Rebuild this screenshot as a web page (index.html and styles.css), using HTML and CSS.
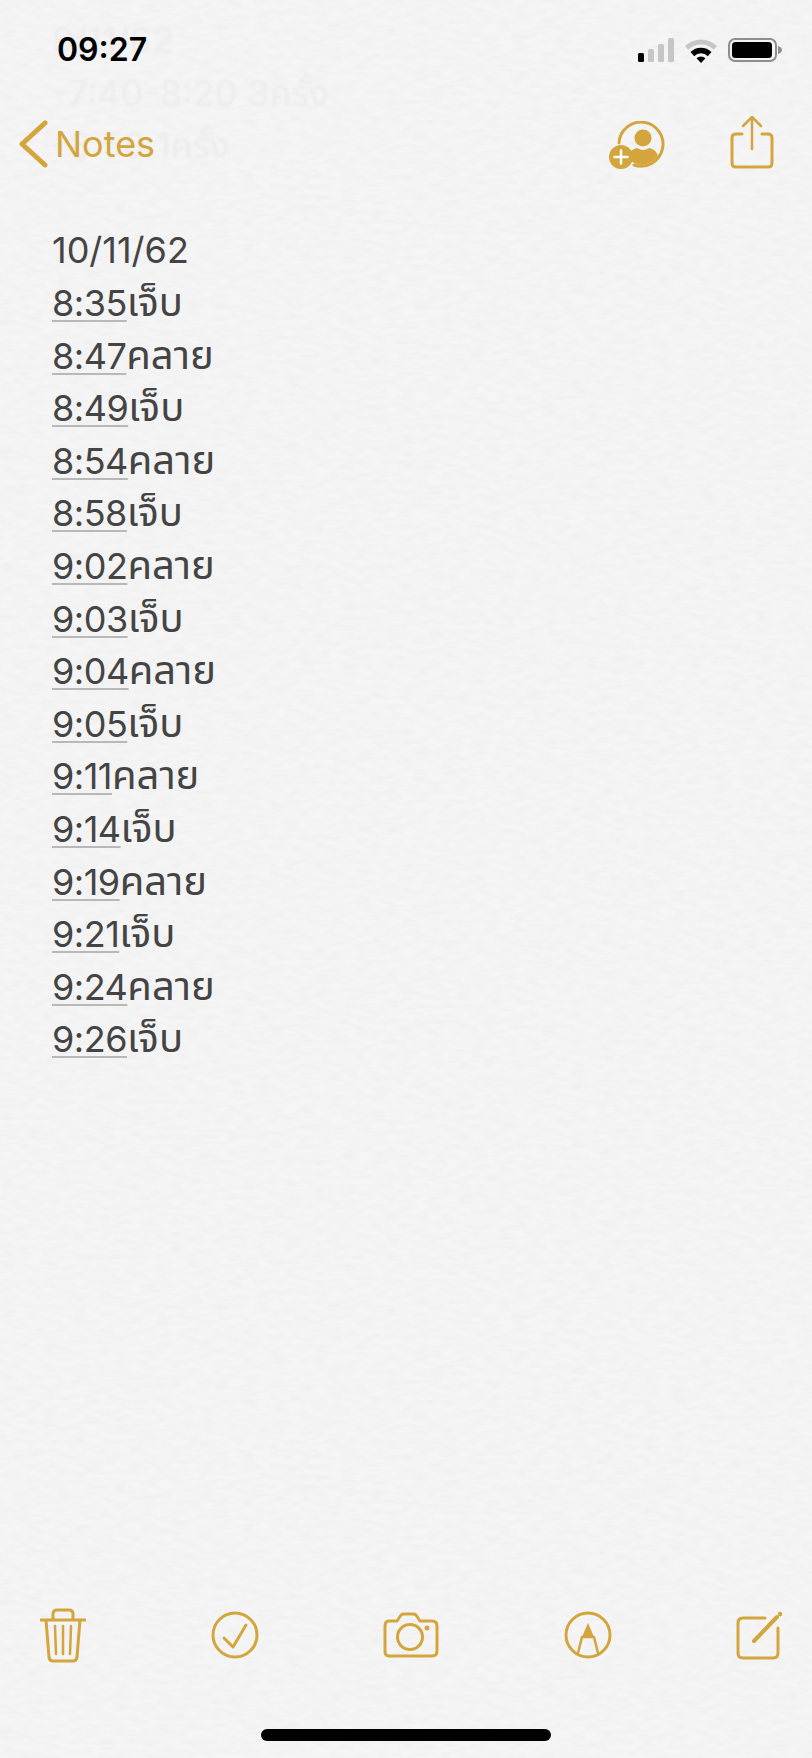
FILE: index.html
```html
<!DOCTYPE html>
<html lang="th">
<head>
  <meta charset="UTF-8">
  <meta name="viewport" content="width=device-width, initial-scale=1.0">
  <title>Notes</title>
  <link rel="stylesheet" href="styles.css">
</head>
<body>
  <div class="screen">
    <!-- paper grain -->
    <svg class="paper" width="812" height="1758">
      <filter id="grain">
        <feTurbulence type="fractalNoise" baseFrequency="0.07 0.2" numOctaves="4" seed="7"/>
        <feColorMatrix values="0 0 0 0 0.45  0 0 0 0 0.45  0 0 0 0 0.45  0.14 0 0 0 -0.045"/>
      </filter>
      <rect width="812" height="1758" filter="url(#grain)"/>
    </svg>

    <div class="note">
      <div class="line scrolled">9/11/62</div>
      <div class="line scrolled">-7:40-8:20 3<span class="thai">ครั้ง</span></div>
      <div class="line scrolled">-8:50 1<span class="thai">ครั้ง</span></div>
      <div class="line">&nbsp;</div>
      <div class="line">10/11/62</div>
      <div class="line"><span class="time">8:35</span><span class="thai">เจ็บ</span></div>
      <div class="line"><span class="time">8:47</span><span class="thai">คลาย</span></div>
      <div class="line"><span class="time">8:49</span><span class="thai">เจ็บ</span></div>
      <div class="line"><span class="time">8:54</span><span class="thai">คลาย</span></div>
      <div class="line"><span class="time">8:58</span><span class="thai">เจ็บ</span></div>
      <div class="line"><span class="time">9:02</span><span class="thai">คลาย</span></div>
      <div class="line"><span class="time">9:03</span><span class="thai">เจ็บ</span></div>
      <div class="line"><span class="time">9:04</span><span class="thai">คลาย</span></div>
      <div class="line"><span class="time">9:05</span><span class="thai">เจ็บ</span></div>
      <div class="line"><span class="time">9:11</span><span class="thai">คลาย</span></div>
      <div class="line"><span class="time">9:14</span><span class="thai">เจ็บ</span></div>
      <div class="line"><span class="time">9:19</span><span class="thai">คลาย</span></div>
      <div class="line"><span class="time">9:21</span><span class="thai">เจ็บ</span></div>
      <div class="line"><span class="time">9:24</span><span class="thai">คลาย</span></div>
      <div class="line"><span class="time">9:26</span><span class="thai">เจ็บ</span></div>
    </div>

    <div class="toolbar">
      <svg class="icon" width="46" height="60" viewBox="0 0 46 60">
        <path d="M1 14H45M13 14V8Q13 4 17 4H29Q33 4 33 8V14M6 14L9 51Q9.5 55 13 55H33Q36.5 55 37 51L40 14"/>
        <path class="thin" d="M15 20L16 48M23 20V48M31 20L30 48"/>
      </svg>
      <svg class="icon" width="50" height="60" viewBox="0 0 50 60">
        <circle cx="25" cy="29" r="22"/>
        <path d="M14 32L23 41L36 19"/>
      </svg>
      <svg class="icon" width="56" height="60" viewBox="0 0 56 60">
        <path d="M6 15H14L18 9Q19 8 21 8H30Q32 8 33 9L37 15H49Q54 15 54 20V45Q54 50 49 50H6Q2 50 2 45V20Q2 15 6 15Z"/>
        <circle cx="27" cy="31" r="12.5"/>
        <circle class="solid" cx="44" cy="22" r="2.5"/>
      </svg>
      <svg class="icon" width="50" height="60" viewBox="0 0 50 60">
        <circle cx="25" cy="29" r="22"/>
        <path class="solid" d="M25 17L31 31H19Z"/>
        <path class="thin" d="M19 31L15 47M31 31L35 47M19 31H31"/>
      </svg>
      <svg class="icon" width="46" height="60" viewBox="0 0 46 60">
        <path d="M29 12H7Q2 12 2 17V47Q2 52 7 52H37Q42 52 42 47V22"/>
        <path class="pen" d="M18 35L41 11"/>
        <circle class="solid" cx="44" cy="8" r="2.2"/>
      </svg>
    </div>
    <div class="home-bar"></div>

    <div class="top">
      <div class="status">
        <span class="clock">09:27</span>
        <div class="status-icons">
          <svg width="36" height="24" viewBox="0 0 36 24">
            <rect x="0" y="15" width="6" height="9" rx="1.5" fill="#000"/>
            <rect x="10" y="11" width="6" height="13" rx="1.5" fill="#c6c6c6"/>
            <rect x="20" y="6" width="6" height="18" rx="1.5" fill="#c6c6c6"/>
            <rect x="30" y="0" width="6" height="24" rx="1.5" fill="#c6c6c6"/>
          </svg>
          <svg width="32" height="25" viewBox="0 0 32 25">
            <path d="M0 8A23 23 0 0 1 32 8L28.8 11.8A18 18 0 0 0 3.2 11.8Z" fill="#c6c6c6"/>
            <path d="M5.5 14A15 15 0 0 1 26.5 14L22.8 18.2A9.5 9.5 0 0 0 9.2 18.2Z" fill="#000"/>
            <path d="M11.5 20.2A6.5 6.5 0 0 1 20.5 20.2L16 25Z" fill="#000"/>
          </svg>
          <svg width="54" height="24" viewBox="0 0 54 24">
            <rect x="1" y="1" width="47" height="22" rx="6" fill="none" stroke="#8e8e8e" stroke-width="2"/>
            <rect x="4" y="4" width="40" height="16" rx="3.5" fill="#000"/>
            <path d="M50 8Q54 9.5 54 12Q54 14.5 50 16Z" fill="#8e8e8e"/>
          </svg>
        </div>
      </div>
      <div class="nav">
        <div class="back">
          <svg class="icon chevron" width="30" height="50" viewBox="0 0 30 50">
            <path d="M26 4L3 25L26 46"/>
          </svg>
          <span class="back-label">Notes</span>
        </div>
        <div class="nav-icons">
          <svg class="icon contact" width="58" height="50" viewBox="0 0 58 50">
            <path d="M10 22A22 22 0 1 1 25 44"/>
            <circle class="solid" cx="34" cy="17" r="8.5"/>
            <path class="solid" d="M19 37Q21 28 28 27Q34 31 40 27Q47 28 49 35Q42 43 33 44Q25 44 19 37Z"/>
            <circle class="solid" cx="12" cy="36" r="12"/>
            <path class="plus" d="M12 29.5V42.5M5.5 36H18.5"/>
          </svg>
          <svg class="icon" width="44" height="54" viewBox="0 0 44 54">
            <path d="M12 19H6Q2 19 2 23V48Q2 52 6 52H38Q42 52 42 48V23Q42 19 38 19H32"/>
            <path class="thin" d="M22 3V34M13 11L22 2L31 11"/>
          </svg>
        </div>
      </div>
    </div>
  </div>
</body>
</html>
```
FILE: styles.css
```css
body {
  margin: 0;
  font-family: Inter, "Noto Sans", "Noto Sans Thai", sans-serif;
  background: #f5f5f5;
}
.screen {
  position: relative;
  width: 812px;
  height: 1758px;
  overflow: hidden;
  display: flex;
  flex-direction: column;
}
.paper {
  position: absolute;
  top: 0;
  left: 0;
}
.note {
  position: relative;
  flex: 1;
  padding: 14px 0 0 52px;
  font-size: 36px;
  line-height: 52.6px;
  color: #444;
}
.scrolled {
  color: #ececec;
  filter: blur(1px);
}
.thai {
  font-size: 40px;
  line-height: 0;
}
.scrolled .thai {
  font-size: 36px;
}
.time {
  letter-spacing: -0.5px;
  text-decoration: underline;
  text-decoration-color: #b8b8b8;
  text-decoration-thickness: 2px;
  text-underline-offset: 4px;
}
.icon {
  fill: none;
  stroke: #d3a53c;
  stroke-width: 3;
  stroke-linecap: round;
  stroke-linejoin: round;
}
.icon .thin {
  stroke-width: 2.5;
}
.icon .pen {
  stroke-width: 4;
}
.icon .solid {
  fill: #d3a53c;
  stroke: none;
}
.icon .plus {
  stroke: #fff;
  stroke-width: 2.5;
}
.toolbar {
  position: relative;
  display: flex;
  justify-content: space-between;
  height: 60px;
  padding: 0 30px 0 40px;
}
.home-bar {
  position: relative;
  width: 290px;
  height: 12px;
  margin: 63px auto 17px;
  border-radius: 6px;
  background: #000;
}
.top {
  position: absolute;
  top: 0;
  left: 0;
  right: 0;
}
.status {
  display: flex;
  justify-content: space-between;
  align-items: center;
  height: 24px;
  padding: 38px 30px 0 57px;
}
.clock {
  margin-top: -2px;
  font-size: 32px;
  font-weight: 600;
  color: #000;
}
.status-icons {
  display: flex;
  align-items: center;
  gap: 11px;
}
.nav {
  display: flex;
  justify-content: space-between;
  align-items: flex-end;
  margin-top: 53px;
  padding: 0 38px 0 19px;
}
.back {
  display: flex;
  align-items: center;
  gap: 6px;
}
.chevron {
  stroke-width: 5;
}
.back-label {
  font-size: 36px;
  color: #d3a53c;
}
.nav-icons {
  display: flex;
  align-items: flex-end;
  gap: 63px;
}
.contact {
  margin-bottom: -2px;
}
```
